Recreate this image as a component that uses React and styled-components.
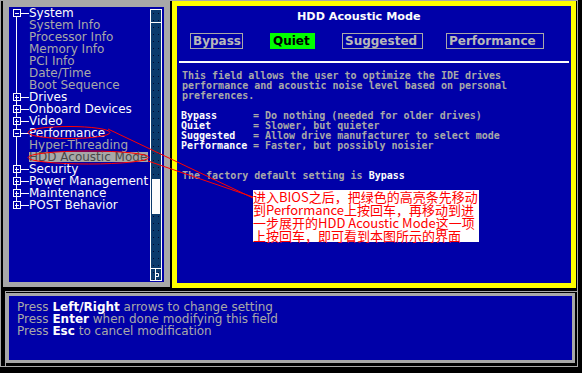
import React from 'react';
import styled, { createGlobalStyle } from 'styled-components';

const GRAY = '#a8a8a8';
const BLUE = '#0000a8';
const YELLOW = '#ffff00';
const WHITE = '#fcfcfc';

const Global = createGlobalStyle`
  html, body { margin: 0; padding: 0; background: #000; width: 582px; height: 373px; overflow: hidden; }
  #root { width: 582px; height: 373px; }
  * { box-sizing: border-box; }
`;

const Page = styled.div`
  position: relative;
  width: 582px;
  height: 373px;
  background: #000;
  overflow: hidden;
`;

const Screen = styled.div`
  width: 578px;
  height: 367px;
  border: 1px solid ${GRAY};
  display: flex;
  flex-direction: column;
`;

const TopRow = styled.div`
  display: flex;
  align-items: flex-start;
  height: 288px;
`;

const LeftPanel = styled.div`
  margin-left: 2px;
  width: 167px;
  height: 286px;
  border-style: solid;
  border-color: ${GRAY};
  border-width: 6px 6px 5px 6px;
  background: ${BLUE};
  display: flex;
`;

const Tree = styled.div`
  flex: 1;
  font-family: 'DejaVu Sans', sans-serif;
  font-size: 12px;
  line-height: 12px;
`;

const Row = styled.div`
  display: flex;
  align-items: flex-start;
  height: 12px;
`;

const Gutter = styled.svg`
  display: block;
  flex-shrink: 0;
`;

const Label = styled.span`
  white-space: nowrap;
  color: ${(p) => (p.$selected ? '#484848' : p.$sub ? GRAY : WHITE)};
  background: ${(p) =>
    p.$selected
      ? `linear-gradient(to bottom, transparent 1px, ${GRAY} 1px, ${GRAY} 11px, transparent 11px)`
      : 'none'};
  padding-right: ${(p) => (p.$selected ? '1px' : '0')};
`;

const Scroll = styled.div`
  width: 12px;
  margin: 2px 2px 1px 0;
  border: 1px solid ${WHITE};
  display: flex;
  flex-direction: column;
  background-color: #0a3a6c;
  background-image: radial-gradient(circle, #000830 0.7px, transparent 0.9px);
  background-size: 5px 7px;
`;

const ScrollCap = styled.div`
  height: ${(p) => p.$h}px;
  flex-shrink: 0;
  border-color: ${WHITE};
  border-style: solid;
  border-width: ${(p) => (p.$top ? '0 0 1px 0' : '1px 0 0 0')};
`;

const Track = styled.div`
  flex: 1;
  padding: 0 1px;
`;

const Thumb = styled.div`
  margin-top: 156px;
  height: 35px;
  background: ${WHITE};
`;

const RightPanel = styled.div`
  margin-left: 2px;
  width: 404px;
  height: 287px;
  border: 5px solid ${YELLOW};
  background: ${BLUE};
  display: flex;
  flex-direction: column;
`;

const Title = styled.div`
  padding: 4px 0 0 120px;
  height: 18px;
  font-family: 'DejaVu Sans', sans-serif;
  font-weight: bold;
  font-size: 11.2px;
  line-height: 14px;
  color: ${WHITE};
  white-space: nowrap;
`;

const Options = styled.div`
  display: flex;
  margin-top: 9px;
  padding-left: 13px;
`;

const Option = styled.div`
  width: ${(p) => p.$w}px;
  margin-left: ${(p) => p.$ml}px;
  height: 16px;
  border: 1px solid ${(p) => (p.$active ? '#00ff00' : GRAY)};
  background: ${(p) => (p.$active ? '#00ff00' : 'transparent')};
  color: ${(p) => (p.$active ? '#000' : '#b8b8b8')};
  font-family: 'DejaVu Sans', sans-serif;
  font-weight: bold;
  font-size: 12px;
  line-height: 14px;
  padding-left: 2px;
  white-space: nowrap;
`;

const Rule = styled.div`
  height: 2px;
  margin: 12px 2px 0 2px;
  background: ${WHITE};
`;

const Body = styled.div`
  padding: 8px 0 0 5px;
  font-family: 'DejaVu Sans Mono', monospace;
  font-weight: bold;
  font-size: 10px;
  line-height: 10px;
  color: ${GRAY};
  white-space: nowrap;
`;

const Line = styled.div`
  height: 10px;
  margin-bottom: ${(p) => (p.$after || 0) * 10}px;
`;

const Defs = styled.div`
  display: grid;
  grid-template-columns: 72px auto;
  margin-bottom: 20px;
  margin-left: -1px;
`;

const Term = styled.div`
  color: ${WHITE};
  height: 10px;
`;

const Desc = styled.div`
  height: 10px;
`;

const Strong = styled.span`
  color: ${WHITE};
  font-weight: bold;
`;

const BottomFrame = styled.div`
  margin: 2px 0 0 4px;
  height: 75px;
  border-top: 1px solid ${GRAY};
  border-left: 1px solid ${GRAY};
  padding: 1px 2px 3px 0;
`;

const HelpPanel = styled.div`
  height: 100%;
  border: 3px solid ${GRAY};
  background: ${BLUE};
  padding: 5px 0 0 8px;
  font-family: 'DejaVu Sans', sans-serif;
  font-size: 12px;
  line-height: 12px;
  color: ${GRAY};
  white-space: nowrap;
`;

const Key = styled.span`
  color: ${WHITE};
  font-weight: bold;
`;

const Overlay = styled.svg`
  position: absolute;
  left: 0;
  top: 0;
  pointer-events: none;
`;

const Callout = styled.div`
  position: absolute;
  left: 253px;
  top: 190px;
  width: 226px;
  height: 52px;
  background: #fff;
  color: #ff0000;
  font-family: 'Noto Sans CJK SC', sans-serif;
  font-size: 13px;
  line-height: 13px;
  white-space: nowrap;
`;

const CalloutLine = styled.div`
  height: 13px;
`;

const treeRows = [
  ['System', 'open'],
  ['System Info', 'leaf'],
  ['Processor Info', 'leaf'],
  ['Memory Info', 'leaf'],
  ['PCI Info', 'leaf'],
  ['Date/Time', 'leaf'],
  ['Boot Sequence', 'leaf'],
  ['Drives', 'closed'],
  ['Onboard Devices', 'closed'],
  ['Video', 'closed'],
  ['Performance', 'open'],
  ['Hyper-Threading', 'leaf'],
  ['HDD Acoustic Mode', 'leaf', true],
  ['Security', 'closed'],
  ['Power Management', 'closed'],
  ['Maintenance', 'closed'],
  ['POST Behavior', 'closed'],
];

function Connector({ kind, first, last }) {
  const boxed = kind !== 'leaf';
  const y1 = first ? 10 : 0;
  const y2 = last ? 2 : 12;
  return (
    <Gutter width="20" height="12" viewBox="0 0 20 12">
      <line x1="7.5" y1={y1} x2="7.5" y2={y2} stroke={WHITE} />
      {boxed && (
        <>
          <rect x="4.5" y="2.5" width="7" height="7" fill={BLUE} stroke={WHITE} />
          <line x1="12" y1="6.5" x2="20" y2="6.5" stroke={WHITE} />
          <line x1="6" y1="6.5" x2="10" y2="6.5" stroke={WHITE} />
          {kind === 'closed' && <line x1="7.5" y1="4" x2="7.5" y2="9" stroke={WHITE} />}
        </>
      )}
    </Gutter>
  );
}

const options = [
  { t: 'Bypass', w: 53, ml: 0 },
  { t: 'Quiet', w: 45, ml: 27, active: true },
  { t: 'Suggested', w: 81, ml: 27 },
  { t: 'Performance', w: 98, ml: 23 },
];

const defs = [
  ['Bypass', '= Do nothing (needed for older drives)'],
  ['Quiet', '= Slower, but quieter'],
  ['Suggested', '= Allow drive manufacturer to select mode'],
  ['Performance', '= Faster, but possibly noisier'],
];

export default function App() {
  return (
    <Page>
      <Global />
      <Screen>
        <TopRow>
          <LeftPanel>
            <Tree>
              {treeRows.map(([t, kind, sel], i) => (
                <Row key={t}>
                  <Connector kind={kind} first={i === 0} last={i === treeRows.length - 1} />
                  <Label $sub={kind === 'leaf'} $selected={sel}>
                    {t}
                  </Label>
                </Row>
              ))}
            </Tree>
            <Scroll>
              <ScrollCap $top $h={13} />
              <Track>
                <Thumb />
              </Track>
              <ScrollCap $h={12}>
                <svg width="10" height="11" viewBox="0 0 10 11" style={{ display: 'block' }}>
                  <line x1="4.5" y1="0" x2="4.5" y2="11" stroke={WHITE} />
                  <polyline points="5,4.5 7.5,4.5 7.5,7.5 5,7.5" fill="none" stroke={WHITE} />
                </svg>
              </ScrollCap>
            </Scroll>
          </LeftPanel>
          <RightPanel>
            <Title>HDD Acoustic Mode</Title>
            <Options>
              {options.map((o) => (
                <Option key={o.t} $w={o.w} $ml={o.ml} $active={o.active}>
                  {o.t}
                </Option>
              ))}
            </Options>
            <Rule />
            <Body>
              <Line>This field allows the user to optimize the IDE drives</Line>
              <Line>performance and acoustic noise level based on personal</Line>
              <Line $after={1}>preferences.</Line>
              <Defs>
                {defs.map(([k, v]) => (
                  <React.Fragment key={k}>
                    <Term>{k}</Term>
                    <Desc>{v}</Desc>
                  </React.Fragment>
                ))}
              </Defs>
              <Line>
                The factory default setting is <Strong>Bypass</Strong>
              </Line>
            </Body>
          </RightPanel>
        </TopRow>
        <BottomFrame>
          <HelpPanel>
            <div>
              Press <Key>Left/Right</Key> arrows to change setting
            </div>
            <div>
              Press <Key>Enter</Key> when done modifying this field
            </div>
            <div>
              Press <Key>Esc</Key> to cancel modification
            </div>
          </HelpPanel>
        </BottomFrame>
      </Screen>
      <Overlay width="582" height="373" viewBox="0 0 582 373">
        <ellipse cx="69" cy="132.5" rx="41" ry="6" fill="none" stroke="#ff0000" />
        <ellipse cx="88.5" cy="157.5" rx="60.5" ry="6.5" fill="none" stroke="#ff0000" />
        <line x1="108" y1="129" x2="253" y2="198" stroke="#ff0000" />
        <line x1="148" y1="161" x2="253" y2="197" stroke="#ff0000" />
      </Overlay>
      <Callout>
        <CalloutLine>进入BIOS之后，把绿色的高亮条先移动</CalloutLine>
        <CalloutLine>到Performance上按回车，再移动到进</CalloutLine>
        <CalloutLine>一步展开的HDD Acoustic Mode这一项</CalloutLine>
        <CalloutLine>上按回车，即可看到本图所示的界面</CalloutLine>
      </Callout>
    </Page>
  );
}
